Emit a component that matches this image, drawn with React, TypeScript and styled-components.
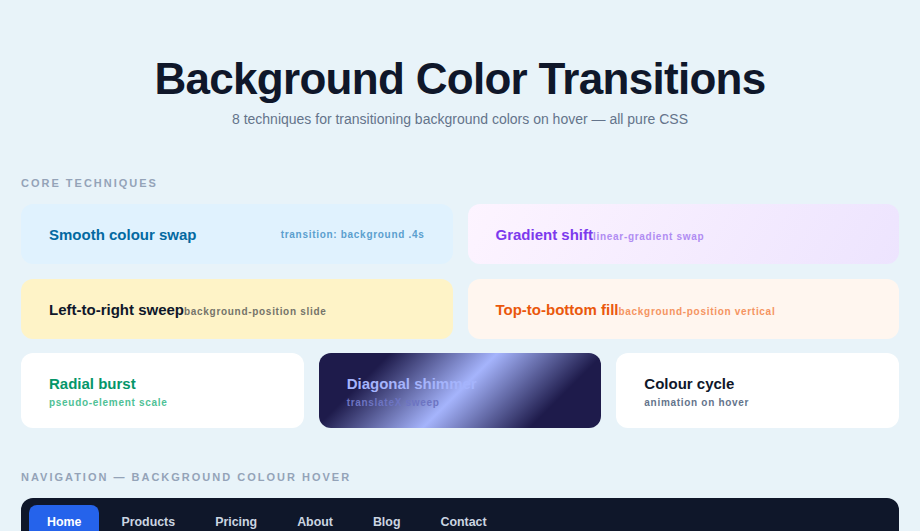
import React from "react";
import styled, { createGlobalStyle } from "styled-components";

const GlobalStyle = createGlobalStyle`
  body {
    margin: 0;
    background: #e8f3f9;
    font-family: "Liberation Sans", Arial, sans-serif;
  }
`;

const Page = styled.div`
  padding: 52px 21px 0;
`;

const Header = styled.header`
  text-align: center;
  margin-bottom: 46px;

  h1 {
    margin: 0;
    font-size: 44px;
    line-height: 53px;
    letter-spacing: -0.7px;
    font-weight: 700;
    color: #0f172a;
  }
  p {
    margin: 4px 0 0;
    font-size: 14px;
    line-height: 21px;
    color: #64748b;
  }
`;

const SectionLabel = styled.div`
  font-size: 11px;
  line-height: 14px;
  font-weight: 700;
  letter-spacing: 2px;
  text-transform: uppercase;
  color: #94a3b8;
  margin-bottom: 14px;
`;

const Grid = styled.div<{ $cols: number }>`
  display: grid;
  grid-template-columns: repeat(${(p) => p.$cols}, 1fr);
  gap: 15px;
  margin-bottom: 14px;
`;

const Card = styled.div<{ $bg: string; $spread?: boolean }>`
  height: 60px;
  box-sizing: border-box;
  padding: 0 28px;
  border-radius: 12px;
  background: ${(p) => p.$bg};
  display: flex;
  align-items: center;
  justify-content: ${(p) => (p.$spread ? "space-between" : "flex-start")};
`;

const InlineRow = styled.div`
  display: flex;
  align-items: baseline;
`;

const StackCard = styled.div<{ $bg: string }>`
  height: 75px;
  box-sizing: border-box;
  padding: 21px 28px 19px;
  border-radius: 12px;
  background: ${(p) => p.$bg};
`;

const Title = styled.div<{ $color: string }>`
  font-size: 15px;
  line-height: 19px;
  font-weight: 700;
  color: ${(p) => p.$color};
  white-space: nowrap;
`;

const Sub = styled.div<{ $color: string }>`
  font-size: 10px;
  line-height: 13px;
  font-weight: 700;
  letter-spacing: 0.7px;
  color: ${(p) => p.$color};
  white-space: nowrap;
`;

const StackSub = styled(Sub)`
  margin-top: 3px;
`;

const NavSection = styled.div`
  margin-top: 42px;
`;

const Nav = styled.nav`
  background: #0f172a;
  border-radius: 12px;
  padding: 7px 8px;
  display: flex;
  gap: 4px;
`;

const NavItem = styled.a<{ $active?: boolean }>`
  padding: 7px 18px;
  border-radius: 8px;
  font-size: 12.4px;
  line-height: 20px;
  font-weight: 700;
  color: ${(p) => (p.$active ? "#ffffff" : "#cbd5e1")};
  background: ${(p) => (p.$active ? "#2563eb" : "transparent")};
  text-decoration: none;
`;

const navItems = ["Home", "Products", "Pricing", "About", "Blog", "Contact"];

export default function App() {
  return (
    <Page>
      <GlobalStyle />
      <Header>
        <h1>Background Color Transitions</h1>
        <p>8 techniques for transitioning background colors on hover — all pure CSS</p>
      </Header>

      <SectionLabel>Core techniques</SectionLabel>
      <Grid $cols={2}>
        <Card $bg="#e0f2fe" $spread>
          <Title $color="#0369a1">Smooth colour swap</Title>
          <Sub $color="#5b9fce">transition: background .4s</Sub>
        </Card>
        <Card $bg="linear-gradient(120deg, #fdf4ff 0%, #ede4fe 100%)">
          <InlineRow>
            <Title $color="#7c3aed">Gradient shift</Title>
            <Sub $color="#b08cf2">linear-gradient swap</Sub>
          </InlineRow>
        </Card>
        <Card $bg="#fef3c7">
          <InlineRow>
            <Title $color="#0f172a">Left-to-right sweep</Title>
            <Sub $color="#75736a">background-position slide</Sub>
          </InlineRow>
        </Card>
        <Card $bg="#fff6ef">
          <InlineRow>
            <Title $color="#ea580c">Top-to-bottom fill</Title>
            <Sub $color="#f59461">background-position vertical</Sub>
          </InlineRow>
        </Card>
      </Grid>
      <Grid $cols={3}>
        <StackCard $bg="#ffffff">
          <Title $color="#059669">Radial burst</Title>
          <StackSub $color="#4fc196">pseudo-element scale</StackSub>
        </StackCard>
        <StackCard $bg="linear-gradient(135deg, #1e1b4b 0%, #1e1b4b 20%, #a5b4fc 50%, #1e1b4b 80%, #1e1b4b 100%)">
          <Title $color="#a5b4fc">Diagonal shimmer</Title>
          <StackSub $color="#6d74c2">translateX sweep</StackSub>
        </StackCard>
        <StackCard $bg="#ffffff">
          <Title $color="#0f172a">Colour cycle</Title>
          <StackSub $color="#64748b">animation on hover</StackSub>
        </StackCard>
      </Grid>

      <NavSection>
        <SectionLabel>Navigation — background colour hover</SectionLabel>
        <Nav>
          {navItems.map((item, i) => (
            <NavItem key={item} href="#" $active={i === 0}>
              {item}
            </NavItem>
          ))}
        </Nav>
      </NavSection>
    </Page>
  );
}
